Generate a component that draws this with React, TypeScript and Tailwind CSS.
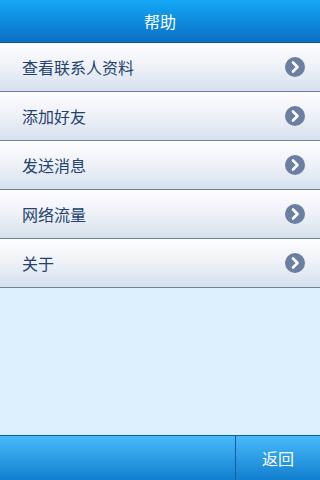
const items = ["查看联系人资料", "添加好友", "发送消息", "网络流量", "关于"];

function ArrowIcon() {
  return (
    <svg width="20" height="20" viewBox="0 0 20 20">
      <circle cx="10" cy="10" r="10" fill="#6a7fa2" />
      <path d="M8 5.5 L12.5 10 L8 14.5" fill="none" stroke="#fff" strokeWidth="2.6" strokeLinecap="round" strokeLinejoin="round" />
    </svg>
  );
}

export default function App() {
  return (
    <div
      className="w-[320px] h-[480px] flex flex-col bg-[#ddf0fd] overflow-hidden"
      style={{ fontFamily: '"Noto Sans CJK SC", "Noto Sans", sans-serif' }}
    >
      {/* 상단 제목 */}
      <header className="h-[43px] shrink-0 flex items-center justify-center bg-gradient-to-b from-[#15a8f6] to-[#0a70c4] border-b border-[#0b5695]">
        <h1 className="text-white text-[16px] leading-none">帮助</h1>
      </header>

      <ul className="flex flex-col">
        {items.map((label) => (
          <li
            key={label}
            className="h-[49px] flex items-center justify-between pl-[22px] pr-[15px] border-b border-[#6c819b] bg-gradient-to-b from-[#fefdff] via-[#eef1f7] to-[#d5e1ed]"
          >
            <span className="text-[16px] text-[#23426f] leading-none">{label}</span>
            <ArrowIcon />
          </li>
        ))}
      </ul>

      <div className="flex-1" />

      {/* 하단 바 */}
      <footer className="h-[45px] shrink-0 flex border-t border-[#0d5c9c] bg-gradient-to-b from-[#46baf9] to-[#0f7fcf]">
        <div className="w-[236px] border-r border-[#0d5c9c]" />
        <button className="flex-1 flex items-center justify-center text-white text-[16px] leading-none">返回</button>
      </footer>
    </div>
  );
}
